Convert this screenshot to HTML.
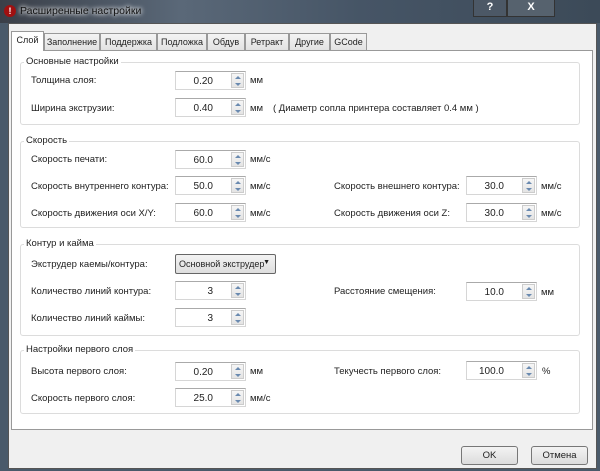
<!DOCTYPE html>
<html><head><meta charset="utf-8"><style>
*{box-sizing:border-box;margin:0;padding:0}
body{width:600px;height:471px;overflow:hidden;font-family:"Liberation Sans",sans-serif;font-size:9.5px;color:#222;position:relative;background:#4a5a6a}
.title{position:absolute;left:0;top:0;width:600px;height:23px;background:linear-gradient(90deg,#3a3f48,#5a6878 30%,#465566 60%,#3c4a58);}
.title span{position:absolute;left:20px;top:5px;color:#111;font-size:10.5px;text-shadow:0 0 6px #fff,0 0 4px #fff}
.ic{position:absolute;left:4px;top:5px;width:12px;height:12px;border-radius:6px;background:#a01010;color:#fff;font-size:9px;text-align:center;line-height:12px;font-weight:bold}
.tb{position:absolute;top:0;height:17px;border:1px solid #333;border-top:none;color:#fff;font-weight:bold;text-align:center;line-height:15px;font-size:11px}
.client{position:absolute;left:8px;top:23px;width:589px;height:446px;background:#f0f0f0;border:1px solid #555}
.panel{position:absolute;left:11px;top:50px;width:582px;height:380px;background:#fff;border:1px solid #999}
.tab{position:absolute;top:33px;height:17px;border:1px solid #999;border-bottom:none;background:linear-gradient(#f4f4f4,#e2e2e2);text-align:center;line-height:16px;font-size:9px;white-space:nowrap;overflow:hidden}
.tab.a{top:31px;height:20px;background:#fff;z-index:2}
.g{position:absolute;left:20px;width:560px;border:1px solid #dcdcdc;border-radius:3px}
.gl{position:absolute;background:#fff;padding:0 2px;font-size:9.5px}
.l{position:absolute;font-size:9.5px;white-space:nowrap}
.in{position:absolute;width:71px;height:19px;border:1px solid #d6d6d6;border-top-color:#aaa;background:#fff}
.in b{position:absolute;right:32px;top:4px;font-weight:normal;width:40px;text-align:right;font-size:10px}
.in i{position:absolute;right:1px;top:1px;width:13px;height:15px;border:1px solid #ccc;background:linear-gradient(#f6f6f6,#e4e4e4)}
.in i:before{content:"";position:absolute;left:3px;top:2px;border:3px solid transparent;border-bottom:3px solid #6a8ab0;border-top:none}
.in i:after{content:"";position:absolute;left:3px;top:9px;border:3px solid transparent;border-top:3px solid #6a8ab0;border-bottom:none}
.btn{position:absolute;top:446px;width:57px;height:19px;border:1px solid #777;border-radius:3px;background:linear-gradient(#f3f3f3,#dcdcdc);text-align:center;line-height:17px;font-size:9.5px}
</style></head><body>
<div class="title"><div class="ic">!</div><span>Расширенные настройки</span>
<div class="tb" style="left:473px;width:34px;background:#4c5866">?</div>
<div class="tb" style="left:507px;width:48px;background:#56626e">X</div></div>
<div class="client"></div>
<div class="panel"></div>
<div class="tab a" style="left:11px;width:33px">Слой</div>
<div class="tab" style="left:44px;width:56px">Заполнение</div>
<div class="tab" style="left:100px;width:57px">Поддержка</div>
<div class="tab" style="left:157px;width:50px">Подложка</div>
<div class="tab" style="left:207px;width:38px">Обдув</div>
<div class="tab" style="left:245px;width:44px">Ретракт</div>
<div class="tab" style="left:289px;width:41px">Другие</div>
<div class="tab" style="left:330px;width:37px">GCode</div>

<div class="g" style="top:62px;height:63px"></div><div class="gl" style="left:24px;top:56px">Основные настройки</div>
<div class="l" style="left:31px;top:75px">Толщина слоя:</div><div class="in" style="left:175px;top:71px"><b>0.20</b><i></i></div><div class="l" style="left:250px;top:75px">мм</div>
<div class="l" style="left:31px;top:103px">Ширина экструзии:</div><div class="in" style="left:175px;top:98px"><b>0.40</b><i></i></div><div class="l" style="left:250px;top:103px">мм</div>
<div class="l" style="left:273px;top:103px">( Диаметр сопла принтера составляет 0.4 мм )</div>

<div class="g" style="top:141px;height:87px"></div><div class="gl" style="left:24px;top:135px">Скорость</div>
<div class="l" style="left:31px;top:154px">Скорость печати:</div><div class="in" style="left:175px;top:150px"><b>60.0</b><i></i></div><div class="l" style="left:250px;top:154px">мм/с</div>
<div class="l" style="left:31px;top:181px">Скорость внутреннего контура:</div><div class="in" style="left:175px;top:176px"><b>50.0</b><i></i></div><div class="l" style="left:250px;top:181px">мм/с</div>
<div class="l" style="left:31px;top:208px">Скорость движения оси X/Y:</div><div class="in" style="left:175px;top:203px"><b>60.0</b><i></i></div><div class="l" style="left:250px;top:208px">мм/с</div>
<div class="l" style="left:334px;top:181px">Скорость внешнего контура:</div><div class="in" style="left:466px;top:176px"><b>30.0</b><i></i></div><div class="l" style="left:541px;top:181px">мм/с</div>
<div class="l" style="left:334px;top:208px">Скорость движения оси Z:</div><div class="in" style="left:466px;top:203px"><b>30.0</b><i></i></div><div class="l" style="left:541px;top:208px">мм/с</div>

<div class="g" style="top:244px;height:92px"></div><div class="gl" style="left:24px;top:238px">Контур и кайма</div>
<div class="l" style="left:31px;top:259px">Экструдер каемы/контура:</div>
<div style="position:absolute;left:175px;top:254px;width:101px;height:20px;border:1px solid #666;border-radius:2px;background:linear-gradient(#f3f3f3,#dedede);padding:4px 0 0 3px;font-size:9px;white-space:nowrap">Основной экструдер <span style="position:absolute;right:5px;top:4px;font-size:7px">▼</span></div>
<div class="l" style="left:31px;top:286px">Количество линий контура:</div><div class="in" style="left:175px;top:281px"><b style="right:32px">3</b><i></i></div>
<div class="l" style="left:31px;top:313px">Количество линий каймы:</div><div class="in" style="left:175px;top:308px"><b style="right:32px">3</b><i></i></div>
<div class="l" style="left:334px;top:286px">Расстояние смещения:</div><div class="in" style="left:466px;top:282px"><b>10.0</b><i></i></div><div class="l" style="left:541px;top:287px">мм</div>

<div class="g" style="top:350px;height:64px"></div><div class="gl" style="left:24px;top:344px">Настройки первого слоя</div>
<div class="l" style="left:31px;top:366px">Высота первого слоя:</div><div class="in" style="left:175px;top:362px"><b>0.20</b><i></i></div><div class="l" style="left:250px;top:366px">мм</div>
<div class="l" style="left:31px;top:393px">Скорость первого слоя:</div><div class="in" style="left:175px;top:388px"><b>25.0</b><i></i></div><div class="l" style="left:250px;top:393px">мм/с</div>
<div class="l" style="left:334px;top:366px">Текучесть первого слоя:</div><div class="in" style="left:466px;top:361px"><b>100.0</b><i></i></div><div class="l" style="left:542px;top:366px">%</div>

<div class="btn" style="left:461px">OK</div>
<div class="btn" style="left:531px">Отмена</div>
</body></html>
